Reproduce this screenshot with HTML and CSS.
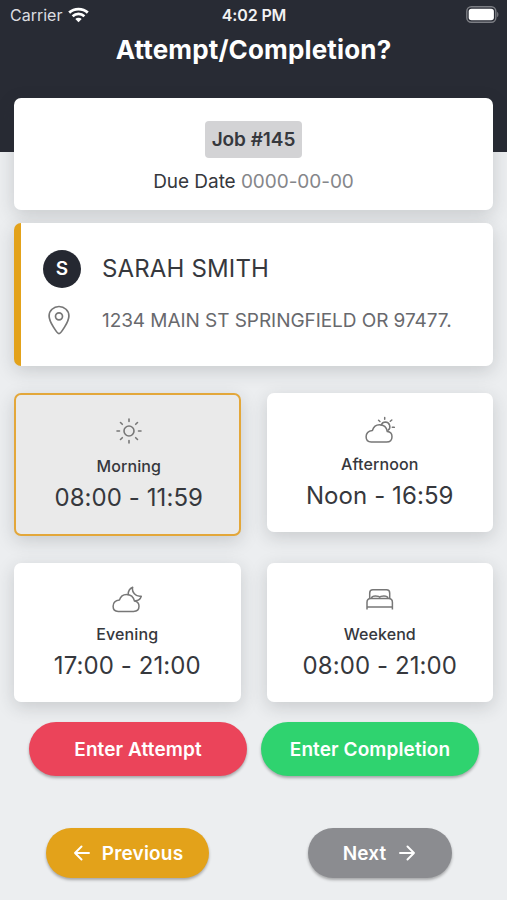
FILE: index.html
```html
<!DOCTYPE html>
<html lang="en">
<head>
    <meta charset="UTF-8">
    <meta name="viewport" content="width=device-width, initial-scale=1.0">
    <title>Attempt/Completion?</title>
    <link rel="stylesheet" href="styles.css">
</head>
<body>
    <header class="header">
        <div class="status-bar">
            <div class="carrier">
                <span>Carrier</span>
                <svg class="wifi" width="21" height="16" viewBox="0 0 21 16" fill="none" stroke="#fff" stroke-width="2.8">
                    <path d="M1.2 5.6C6.3 .9 14.7 .9 19.8 5.6"/>
                    <path d="M4.6 9.2C8 6.2 13 6.2 16.4 9.2"/>
                    <path d="M10.5 15.2L7.3 12C9 10.4 12 10.4 13.7 12Z" fill="#fff" stroke="none"/>
                </svg>
            </div>
            <span class="clock">4:02 PM</span>
            <svg class="battery" width="33" height="17" viewBox="0 0 33 17">
                <rect x=".8" y=".8" width="29" height="15.4" rx="4.5" fill="none" stroke="#7c7e84" stroke-width="1.4"/>
                <rect x="2.7" y="2.7" width="25.2" height="11.6" rx="2.8" fill="#fff"/>
                <path d="M31.2 6v5c1.6-.6 1.6-4.4 0-5z" fill="#7c7e84"/>
            </svg>
        </div>
        <h1>Attempt/Completion?</h1>
    </header>

    <main class="content">
        <section class="card job">
            <span class="job-number">Job #145</span>
            <p class="due">Due Date <span>0000-00-00</span></p>
        </section>

        <section class="card person">
            <div class="avatar">S</div>
            <h2>SARAH SMITH</h2>
            <svg class="pin" width="22" height="30" viewBox="0 0 22 30" fill="none" stroke="#777" stroke-width="1.7">
                <path d="M11 28.7C9.5 28.7 1.1 17 1.1 10.9a9.900 9.400 0 0 1 19.800 0C20.900 17 12.500 28.700 11 28.700z"/>
                <circle cx="11" cy="11.3" r="3.5"/>
            </svg>
            <p class="address">1234 MAIN ST SPRINGFIELD OR 97477.</p>
        </section>

        <section class="slots">
            <div class="card slot selected">
                <svg width="30" height="28" viewBox="0 0 30 28" fill="none" stroke="#777" stroke-width="1.6" stroke-linecap="round">
                    <circle cx="15" cy="14" r="5"/>
                    <path d="M15 2v2.500M15 23.500V26M3 14h2.500M24.500 14H27M6.500 5.500l1.800 1.800M21.700 20.700l1.800 1.800M6.500 22.500l1.800-1.800M21.700 7.300l1.800-1.800"/>
                </svg>
                <h3>Morning</h3>
                <p>08:00 - 11:59</p>
            </div>
            <div class="card slot">
                <svg width="30" height="28" viewBox="0 0 30 28" fill="none" stroke="#777" stroke-width="1.5" stroke-linecap="round" stroke-linejoin="round">
                    <path d="M6.200 27H21.500C25 27 27 24.800 27 21.700c0-3.200-2-5-4.700-5.200C21.600 12.500 18.600 9.800 14.500 9.800c-3.700 0-6 2.100-7.100 5.700C3.500 16 1.100 18.200 1.100 21.800 1.100 25 3.200 27 6.200 27z"/>
                    <path d="M16.200 10c.8-2 2.300-3 4.200-3a4.600 4.600 0 0 1 2.700 8.200"/>
                    <path d="M19.700 2.500v1.800M13.600 5.300l1.300 1.200M26.800 5l-1.500 1.300M27.300 12.300h2"/>
                </svg>
                <h3>Afternoon</h3>
                <p>Noon - 16:59</p>
            </div>
            <div class="card slot">
                <svg width="30" height="28" viewBox="0 0 30 28" fill="none" stroke="#777" stroke-width="1.5" stroke-linecap="round" stroke-linejoin="round">
                    <path d="M6.200 26.400H21.500C25 26.400 27 24.200 27 21.300c0-2.900-1.900-4.700-4.500-5.200C21.600 12.100 18.600 9.400 14.500 9.400c-3.700 0-6 2.100-7.100 5.700C3.500 15.600 1.100 17.800 1.100 21.300 1.100 24.500 3.200 26.400 6.200 26.400z"/>
                    <path d="M16.200 9.500C16.100 6.200 17.800 3.500 20.700 2.200c-1.300 4.500 2.800 10 8.600 9C28.400 14.300 26.300 15.700 23.200 15.700"/>
                </svg>
                <h3>Evening</h3>
                <p>17:00 - 21:00</p>
            </div>
            <div class="card slot">
                <svg width="30" height="28" viewBox="0 0 30 28" fill="none" stroke="#777" stroke-width="1.5" stroke-linejoin="round">
                    <path d="M4.700 13.500V8c0-2 1.200-3.200 3.200-3.200H21.500c2 0 3.200 1.200 3.200 3.200v5.500"/>
                    <path d="M6.500 13c.3-1.600 2-2 4-2 2.400 0 3.800.4 4.200 1.300.4-.9 1.800-1.300 4.200-1.300 2 0 3.700.4 4 2"/>
                    <path d="M2 24.500v-7.200c0-2.600 1.300-3.900 3.800-3.900h17.800c2.500 0 3.800 1.300 3.800 3.900v7.200M2 22h25.400"/>
                </svg>
                <h3>Weekend</h3>
                <p>08:00 - 21:00</p>
            </div>
        </section>

        <div class="actions">
            <button class="btn attempt">Enter Attempt</button>
            <button class="btn completion">Enter Completion</button>
        </div>

        <nav class="pager">
            <button class="btn previous">
                <svg width="16" height="16" viewBox="0 0 16 16" fill="none" stroke="#fff" stroke-width="1.9" stroke-linecap="round" stroke-linejoin="round"><path d="M7.500 1.500L1 8l6.500 6.500M1 8h14"/></svg>
                <span>Previous</span>
            </button>
            <button class="btn next">
                <span>Next</span>
                <svg width="16" height="16" viewBox="0 0 16 16" fill="none" stroke="#fff" stroke-width="1.9" stroke-linecap="round" stroke-linejoin="round"><path d="M8.500 1.500L15 8l-6.500 6.500M15 8H1"/></svg>
            </button>
        </nav>
    </main>
</body>
</html>
```
FILE: styles.css
```css
* {
    box-sizing: border-box;
}
body {
    margin: 0;
    min-height: 900px;
    font-family: Inter, "Liberation Sans", sans-serif;
    background-color: #eceef0;
    color: #36383d;
}
h1, h2, h3, p {
    margin: 0;
    white-space: nowrap;
}
.header {
    height: 152px;
    background-color: #282b34;
    color: #fff;
    text-align: center;
}
.status-bar {
    display: grid;
    grid-template-columns: 1fr auto 1fr;
    align-items: center;
    height: 30px;
    padding: 0 8px 0 10px;
    font-size: 16px;
    line-height: 30px;
}
.carrier {
    display: flex;
    align-items: center;
    gap: 6px;
    color: #dcdde0;
}
.clock {
    margin-left: -1px;
    font-weight: 600;
    letter-spacing: -0.15px;
    color: #f2f2f3;
}
.battery {
    justify-self: end;
    margin-top: -2px;
}
h1 {
    font-size: 26px;
    font-weight: 700;
    line-height: 40px;
    letter-spacing: 0.15px;
}
.content {
    margin-top: -54px;
    padding: 0 14px;
}
.card {
    background-color: #fff;
    border-radius: 7px;
    box-shadow: 0 5px 18px rgba(40, 43, 52, 0.18);
}
.job {
    height: 112px;
    padding-top: 23px;
    display: flex;
    flex-direction: column;
    align-items: center;
}
.job-number {
    height: 37px;
    padding: 0 7px;
    border-radius: 4px;
    background-color: #d3d3d5;
    font-size: 19px;
    font-weight: 600;
    line-height: 37px;
    letter-spacing: -0.05px;
}
.due {
    margin-top: 12px;
    font-size: 19px;
    line-height: 24px;
    letter-spacing: -0.05px;
}
.due span {
    color: #85868a;
}
.person {
    height: 143px;
    margin-top: 13px;
    padding: 26px 0 0 22px;
    border-left: 7px solid #e3a21a;
    display: grid;
    grid-template-columns: 59px 1fr;
    grid-template-rows: 39px 30px;
    row-gap: 17px;
    align-items: center;
}
.avatar {
    width: 38px;
    height: 38px;
    border-radius: 50%;
    background-color: #252831;
    color: #fff;
    font-size: 19px;
    font-weight: 600;
    line-height: 38px;
    text-align: center;
}
h2 {
    font-size: 24px;
    font-weight: 400;
    letter-spacing: 0.15px;
}
.pin {
    margin-left: 5px;
}
.address {
    font-size: 19px;
    letter-spacing: -0.06px;
    color: #68696d;
}
.slots {
    margin-top: 27px;
    display: grid;
    grid-template-columns: 1fr 1fr;
    column-gap: 26px;
    row-gap: 27px;
    align-items: start;
}
.slot {
    height: 139px;
    padding-top: 22px;
    display: flex;
    flex-direction: column;
    align-items: center;
}
.slot.selected {
    height: 143px;
    padding-left: 3px;
    border: 2px solid #e3a73a;
    background-color: #eaeaea;
}
.slot h3 {
    margin-top: 10px;
    font-size: 16px;
    font-weight: 500;
    line-height: 22px;
    letter-spacing: 0.1px;
}
.slot p {
    margin-top: 7px;
    font-size: 24px;
    line-height: 28px;
    letter-spacing: 0.08px;
}
.actions {
    margin: 20px 0 0 15px;
    display: flex;
    gap: 14px;
}
.btn {
    display: flex;
    align-items: center;
    justify-content: center;
    padding: 0;
    border: none;
    border-radius: 27px;
    box-shadow: 0 2px 3px rgba(0, 0, 0, 0.3);
    color: #fff;
    font-family: inherit;
    font-size: 19px;
    font-weight: 600;
    letter-spacing: 0.1px;
    cursor: pointer;
}
.attempt, .completion {
    width: 218px;
    height: 54px;
}
.attempt {
    background-color: #eb445a;
}
.completion {
    background-color: #2fd36f;
}
.pager {
    margin: 52px 0 0 32px;
    display: flex;
    gap: 99px;
}
.previous, .next {
    height: 50px;
}
.previous {
    width: 163px;
    padding-left: 2px;
    gap: 12px;
    letter-spacing: 0.2px;
    background-color: #e3a21a;
}
.next {
    width: 144px;
    padding-right: 2px;
    gap: 13px;
    background-color: #8b8c90;
}
```
